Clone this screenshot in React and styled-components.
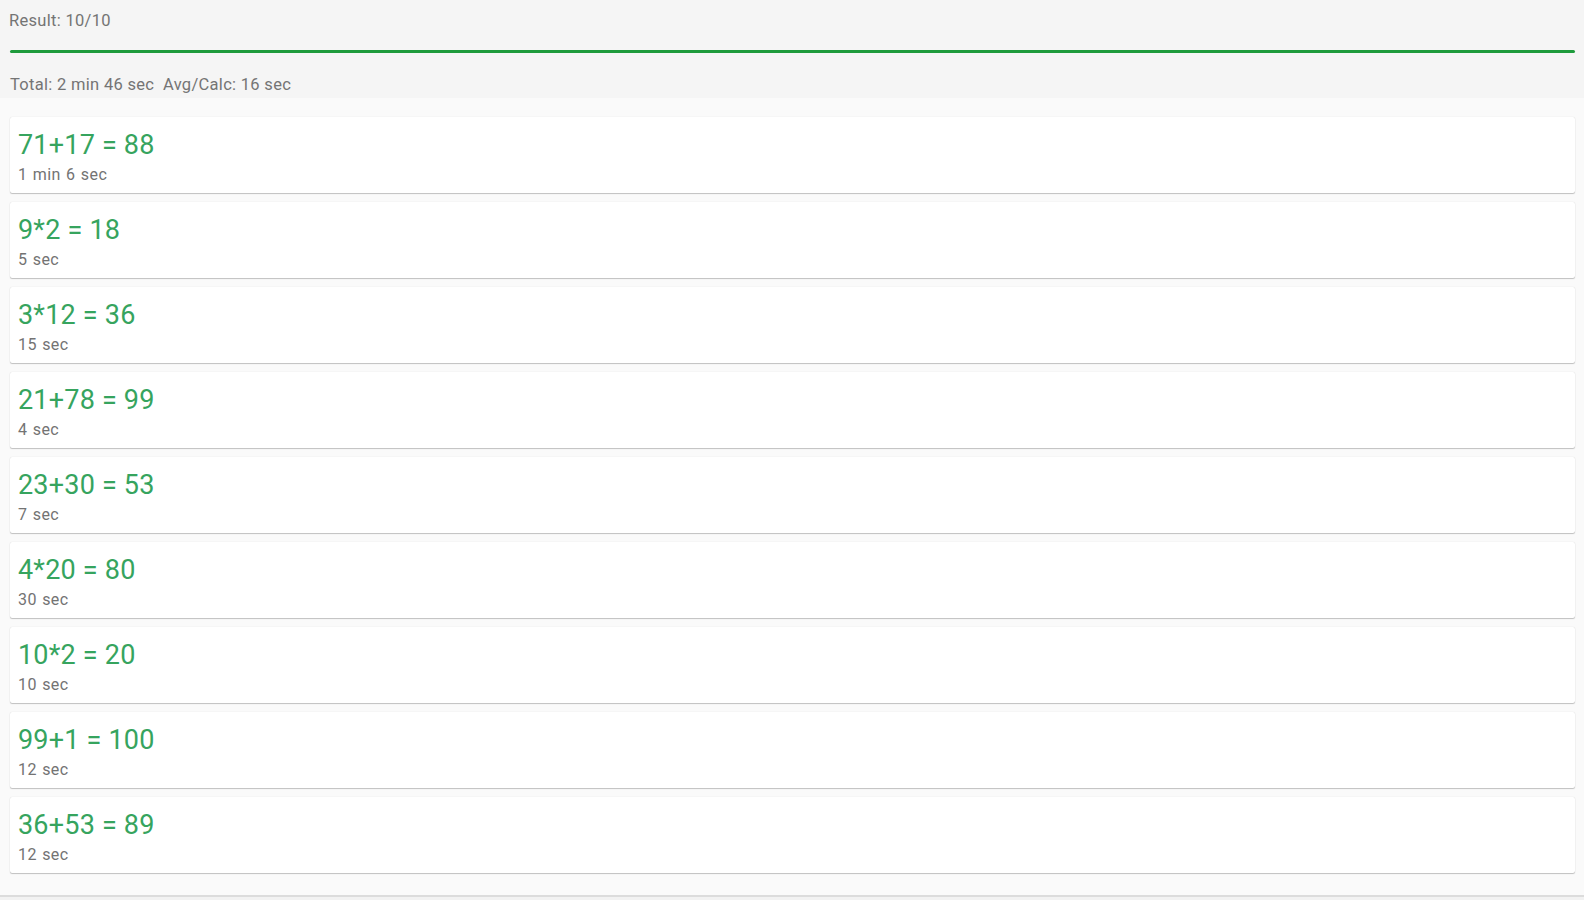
import React from "react";
import styled, { createGlobalStyle } from "styled-components";

const results = [
  { calc: "71+17 = 88", time: "1 min 6 sec" },
  { calc: "9*2 = 18", time: "5 sec" },
  { calc: "3*12 = 36", time: "15 sec" },
  { calc: "21+78 = 99", time: "4 sec" },
  { calc: "23+30 = 53", time: "7 sec" },
  { calc: "4*20 = 80", time: "30 sec" },
  { calc: "10*2 = 20", time: "10 sec" },
  { calc: "99+1 = 100", time: "12 sec" },
  { calc: "36+53 = 89", time: "12 sec" },
];

const GlobalStyle = createGlobalStyle`
  html, body {
    margin: 0;
    padding: 0;
    height: 900px;
    overflow: hidden;
    background: #fafafa;
    font-family: Roboto, "Liberation Sans", sans-serif;
  }
`;

const Screen = styled.div`
  display: flex;
  flex-direction: column;
  height: 900px;
  overflow: hidden;
`;

const Header = styled.div`
  background: #f5f5f5;
  height: 98px;
  padding: 0 9px 0 10px;
  box-sizing: border-box;
  display: flex;
  flex-direction: column;
  flex-shrink: 0;
`;

const Label = styled.div`
  color: #747474;
  font-size: 16.5px;
  line-height: 20px;
  letter-spacing: 0.3px;
`;

const ResultLabel = styled(Label)`
  margin-top: 11px;
  margin-left: -1px;
`;

const Progress = styled.div`
  height: 3px;
  background: #1e9b3c;
  border-radius: 2px;
  margin-top: 19px;
`;

const TotalLabel = styled(Label)`
  margin-top: 22px;
  letter-spacing: 0.3px;
`;

const List = styled.div`
  flex: 1;
  overflow: hidden;
  padding: 19px 9px 0 10px;
  display: flex;
  flex-direction: column;
  gap: 9px;
`;

const Card = styled.div`
  background: #fff;
  height: 76px;
  flex-shrink: 0;
  box-sizing: border-box;
  border-radius: 2px;
  box-shadow: 0 1px 1px rgba(0, 0, 0, 0.22), 0 0 1px rgba(0, 0, 0, 0.18);
  padding: 12px 8px 0 8px;
`;

const Calc = styled.div`
  color: #36a45e;
  font-size: 27px;
  line-height: 32px;
  letter-spacing: 0.2px;
`;

const Time = styled.div`
  color: #737373;
  font-size: 16px;
  line-height: 20px;
  margin-top: 4px;
  letter-spacing: 0.4px;
  word-spacing: 1px;
`;

const BottomEdge = styled.div`
  height: 3px;
  flex-shrink: 0;
  background: #f2f2f2;
  border-top: 2px solid #dcdcdc;
`;

export default function App() {
  return (
    <Screen>
      <GlobalStyle />
      <Header>
        <ResultLabel>Result: 10/10</ResultLabel>
        <Progress />
        <TotalLabel>Total: 2 min 46 sec&nbsp;&nbsp;Avg/Calc: 16 sec</TotalLabel>
      </Header>
      <List>
        {results.map((r, i) => (
          <Card key={i}>
            <Calc>{r.calc}</Calc>
            <Time>{r.time}</Time>
          </Card>
        ))}
      </List>
      <BottomEdge />
    </Screen>
  );
}
